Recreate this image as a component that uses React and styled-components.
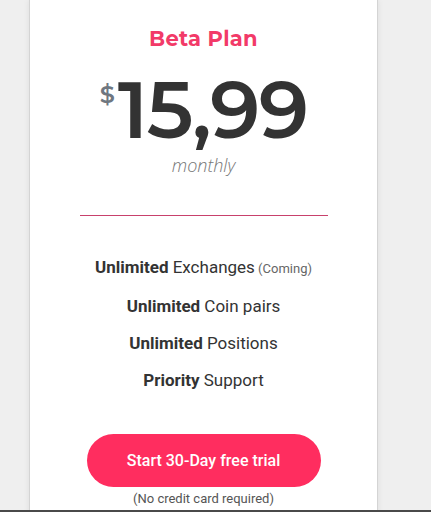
import React from "react";
import styled, { createGlobalStyle } from "styled-components";

const GlobalStyle = createGlobalStyle`
  html, body {
    margin: 0;
    padding: 0;
    background: #efefef;
    height: 512px;
    overflow: hidden;
  }
`;

const Page = styled.div`
  position: relative;
  width: 431px;
  height: 512px;
  background: #efefef;
  overflow: hidden;
`;

const Card = styled.div`
  box-sizing: border-box;
  width: 349px;
  margin-left: 29px;
  height: 530px;
  background: #fff;
  border-left: 1px solid #d4d4d4;
  border-right: 1px solid #d4d4d4;
  box-shadow: 0 0 6px rgba(0, 0, 0, 0.08);
  display: flex;
  flex-direction: column;
  align-items: center;
  padding-top: 26px;
`;

const PlanName = styled.h2`
  margin: 0;
  font-family: "Montserrat", "Open Sans", sans-serif;
  font-weight: 700;
  font-size: 21px;
  color: #f23a68;
  letter-spacing: 0.3px;
`;

const PriceRow = styled.div`
  display: flex;
  align-items: flex-start;
  margin-top: 24px;
  color: #333;
  font-family: "Montserrat", "Open Sans", sans-serif;
`;

const Currency = styled.span`
  font-size: 24px;
  font-weight: 600;
  line-height: 24px;
  color: #6f7780;
  margin-top: 8px;
  margin-right: 3px;
`;

const Amount = styled.span`
  font-size: 80px;
  font-weight: 600;
  line-height: 70px;
  letter-spacing: -1.5px;
`;

const Period = styled.div`
  margin-top: 8px;
  font-family: "Open Sans", sans-serif;
  font-style: italic;
  font-weight: 300;
  font-size: 18px;
  line-height: 24px;
  color: #777;
`;

const Divider = styled.div`
  width: 248px;
  height: 1px;
  background: #c8416c;
  margin-top: 38px;
`;

const Features = styled.ul`
  list-style: none;
  margin: 41px 0 0;
  padding: 0;
  display: flex;
  flex-direction: column;
  align-items: center;
  gap: 17px;
  font-family: Roboto, "Liberation Sans", sans-serif;
  font-size: 17px;
  color: #333;
`;

const Feature = styled.li`
  line-height: 20px;
  b {
    font-weight: 700;
  }
`;

const Note = styled.span`
  font-size: 13px;
  color: #666;
`;

const TrialButton = styled.button`
  margin-top: 44px;
  width: 234px;
  height: 53px;
  border: none;
  border-radius: 27px;
  background: #ff2d5f;
  color: #fff;
  font-family: Roboto, "Liberation Sans", sans-serif;
  font-size: 16px;
  font-weight: 500;
  cursor: pointer;
`;

const Small = styled.div`
  margin-top: 4px;
  font-family: Roboto, "Liberation Sans", sans-serif;
  font-size: 13px;
  color: #555;
`;

const Taskbar = styled.div`
  position: absolute;
  left: 0;
  right: 0;
  bottom: 0;
  height: 2px;
  background: #4a4a4a;
`;

const features = [
  ["Unlimited", "Exchanges", "(Coming)"],
  ["Unlimited", "Coin pairs"],
  ["Unlimited", "Positions"],
  ["Priority", "Support"],
];

export default function App() {
  return (
    <>
      <GlobalStyle />
      <Page>
        <Card>
          <PlanName>Beta Plan</PlanName>
          <PriceRow>
            <Currency>$</Currency>
            <Amount>15,99</Amount>
          </PriceRow>
          <Period>monthly</Period>
          <Divider />
          <Features>
            {features.map(([strong, rest, note]) => (
              <Feature key={rest}>
                <b>{strong}</b> {rest}
                {note && <Note> {note}</Note>}
              </Feature>
            ))}
          </Features>
          <TrialButton>Start 30-Day free trial</TrialButton>
          <Small>(No credit card required)</Small>
        </Card>
        <Taskbar />
      </Page>
    </>
  );
}
